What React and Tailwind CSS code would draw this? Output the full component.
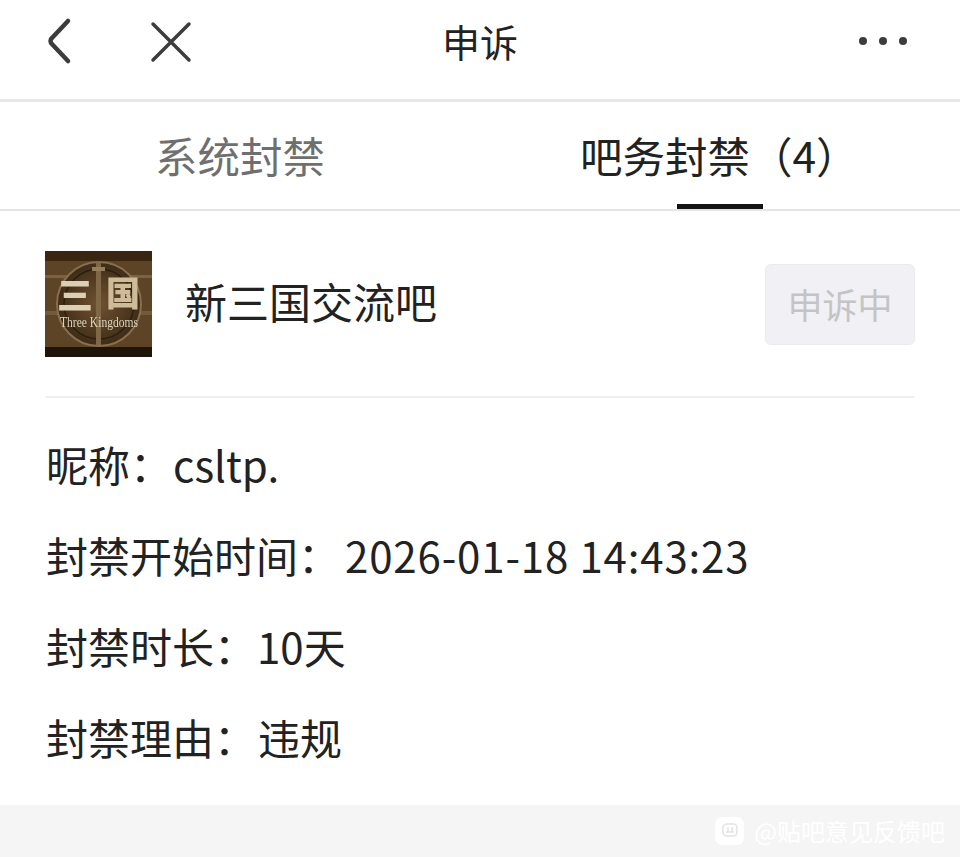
import React from "react";

const font = { fontFamily: '"Noto Sans CJK SC", "Noto Sans", sans-serif' };

const infoRows = [
  ["昵称：", "csltp.", "ml-[1px]"],
  ["封禁开始时间：", "2026-01-18 14:43:23", "ml-[5px] tracking-[0.85px]"],
  ["封禁时长：", "10天", "ml-[1px]"],
  ["封禁理由：", "违规", "ml-[2px]"],
];

const ForumLogo = () => (
  <svg viewBox="0 0 107 106" className="w-[107px] h-[106px] shrink-0 blur-[0.4px]">
    <defs>
      <radialGradient id="disc" cx="50%" cy="50%" r="55%">
        <stop offset="0%" stopColor="#6f5232" />
        <stop offset="100%" stopColor="#3a2814" />
      </radialGradient>
    </defs>
    <rect width="107" height="106" fill="#5e4426" />
    <rect width="107" height="10" fill="#3a2610" />
    <rect y="96" width="107" height="10" fill="#1f1408" />
    <rect y="24" width="107" height="3" fill="#7c6240" />
    <rect y="60" width="107" height="4" fill="#735a38" />
    <circle cx="54" cy="53" r="42" fill="url(#disc)" stroke="#86704e" strokeWidth="2" />
    <circle cx="54" cy="53" r="35" fill="none" stroke="#2b1e10" strokeWidth="1.5" />
    <rect x="51" y="10" width="5" height="84" fill="#7e6846" />
    <rect x="47" y="16" width="13" height="4" fill="#947e5a" />
    <text x="30" y="58" textAnchor="middle" fontSize="36" fontWeight="900" fill="#dccfb4" style={font}>三</text>
    <text x="78" y="55" textAnchor="middle" fontSize="34" fontWeight="900" fill="#cdbb9a" style={font}>国</text>
    <text x="54" y="76" textAnchor="middle" fontSize="15" textLength="78" lengthAdjust="spacingAndGlyphs" fill="#ddd2bc" style={{ fontFamily: '"Liberation Serif", serif' }}>Three Kingdoms</text>
  </svg>
);

const App = () => {
  return (
    <div className="w-[960px] h-[857px] bg-white flex flex-col overflow-hidden" style={font}>
      {/* top bar */}
      <div className="h-[102px] shrink-0 border-b-[3px] border-[#e8e8e8] flex items-center relative">
        <svg viewBox="0 0 30 50" className="w-[30px] h-[50px] ml-[45px] mt-[-16px]" fill="none" stroke="#3c3c3c" strokeWidth="4.5" strokeLinecap="round" strokeLinejoin="round">
          <path d="M23 4 L6 22 Q5 24 6 26 L23 44" />
        </svg>
        <svg viewBox="0 0 42 42" className="w-[42px] h-[42px] ml-[75px] mt-[-16px]" fill="none" stroke="#3c3c3c" strokeWidth="3.5" strokeLinecap="round">
          <path d="M3 3 L39 39 M39 3 L3 39" />
        </svg>
        <span className="absolute left-0 right-0 top-[16px] text-center text-[38px] leading-[50px] text-[#222]">申诉</span>
        <div className="ml-auto mr-[53px] mt-[-18px] flex gap-[12px]">
          <span className="w-[8px] h-[8px] rounded-full bg-[#3c3c3c]" />
          <span className="w-[8px] h-[8px] rounded-full bg-[#3c3c3c]" />
          <span className="w-[8px] h-[8px] rounded-full bg-[#3c3c3c]" />
        </div>
      </div>

      {/* tabs */}
      <div className="h-[109px] shrink-0 border-b-[2px] border-[#e4e4e4] flex">
        <div className="w-[480px] flex justify-center pt-[23px]">
          <span className="text-[42.5px] leading-[60px] text-[#6f6f6f]">系统封禁</span>
        </div>
        <div className="w-[480px] relative pt-[23px] pl-[100px]">
          <span className="text-[42.5px] leading-[60px] text-[#222] whitespace-nowrap">吧务封禁（4）</span>
          <span className="absolute left-[197px] bottom-0 w-[86px] h-[5px] bg-[#141414]" />
        </div>
      </div>

      {/* forum row */}
      <div className="mx-[45px] h-[187px] shrink-0 border-b-[2px] border-[#f0f0f0] flex items-start">
        <div className="mt-[40px]">
          <ForumLogo />
        </div>
        <span className="ml-[33px] mt-[60px] text-[42px] leading-[60px] text-[#222]">新三国交流吧</span>
        <div className="ml-auto mt-[53px] w-[150px] h-[81px] rounded-[6px] border border-[#ebebef] bg-[#f1f0f4] flex items-center justify-center text-[35px] text-[#c4c4c6]">
          申诉中
        </div>
      </div>

      {/* ban details */}
      <div className="flex-1 flex flex-col pl-[46px] pt-[36px] gap-[31px]">
        {infoRows.map(([label, value, valueClass]) => (
          <div key={label} className="text-[42px] leading-[60px] text-[#222] whitespace-nowrap">
            {label}<span className={valueClass}>{value}</span>
          </div>
        ))}
      </div>

      {/* footer with watermark */}
      <div className="h-[52px] shrink-0 bg-[#f5f5f5] flex items-center justify-end pr-[15px] gap-[10px]">
        <span className="w-[29px] h-[28px] rounded-[7px] bg-white flex items-center justify-center">
          <svg viewBox="0 0 20 20" className="w-[20px] h-[20px]" fill="none" stroke="#e4e4e4" strokeWidth="1.6">
            <rect x="3" y="3" width="14" height="12" rx="4" />
            <path d="M8 6 V11 M12 6 V11 M6 11 H14" />
          </svg>
        </span>
        <span className="text-[24px] leading-[30px] text-white">@贴吧意见反馈吧</span>
      </div>
    </div>
  );
};

export default App;
